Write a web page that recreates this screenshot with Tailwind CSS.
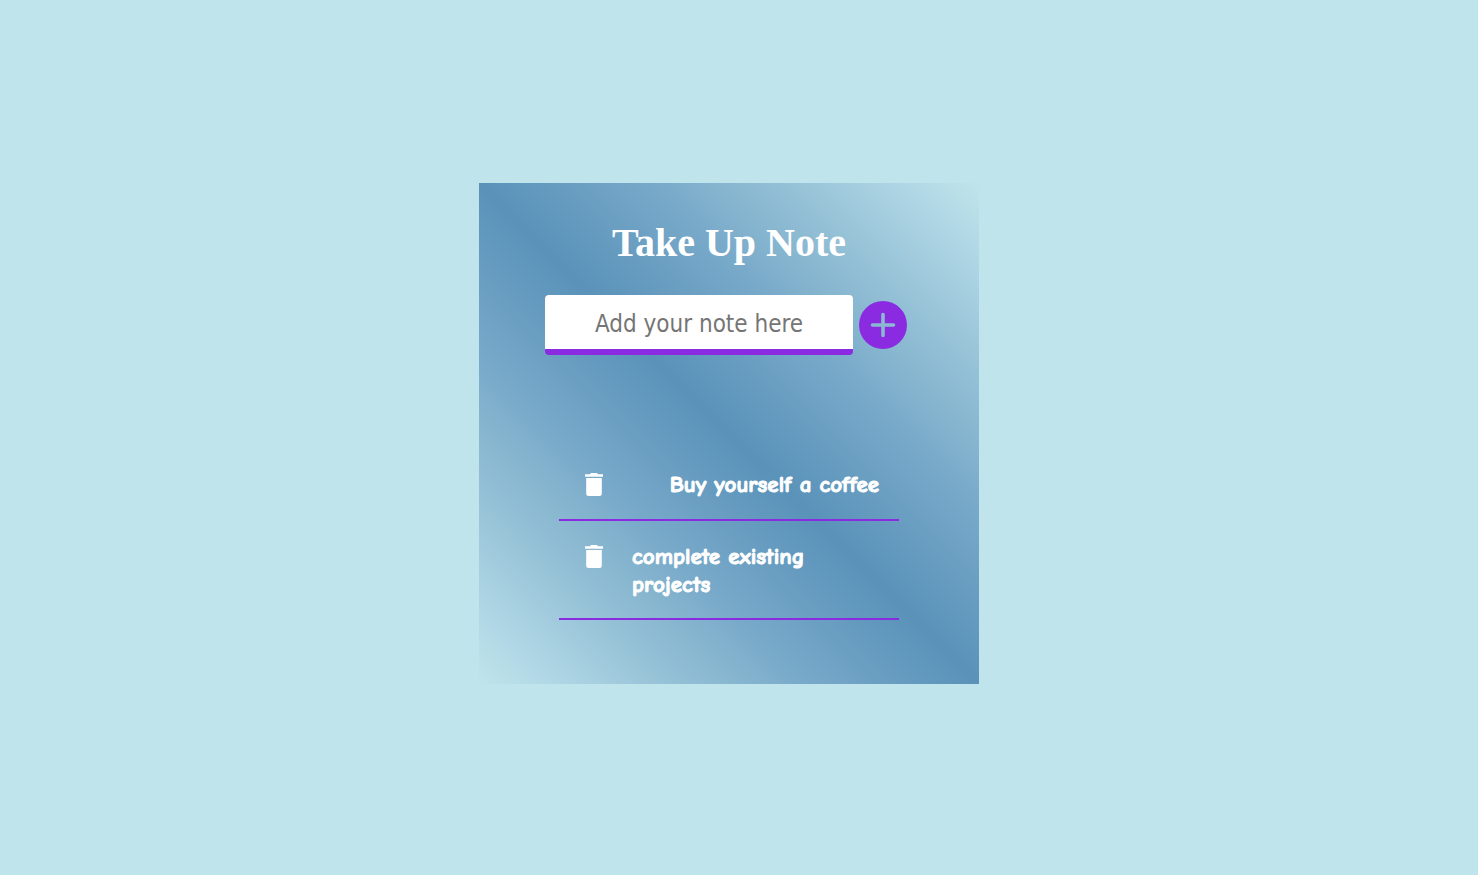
<!DOCTYPE html>
<html lang="en">
<head>
<meta charset="utf-8">
<meta name="viewport" content="width=device-width, initial-scale=1">
<title>Take Up Note</title>
<script src="https://cdn.jsdelivr.net/npm/@tailwindcss/browser@4"></script>
</head>
<body class="flex min-h-screen items-center justify-center bg-[#bfe4ec] pr-5 pb-2">
<main class="flex w-full max-w-[500px] flex-col items-center bg-[linear-gradient(45deg,#bfe4ea_0%,#afd6e5_8%,#9ac5d9_17%,#80b0cc_29%,#79aaca_32%,#5a92b9_50%,#79aaca_68%,#80b0cc_71%,#9ac5d9_83%,#afd6e5_92%,#bfe4ea_100%)] pt-9 pb-16">
  <h1 class="font-['Liberation_Serif',serif] text-[40px] leading-12 font-bold text-white">Take Up Note</h1>
  <form class="mt-7 mr-1.5 flex items-center gap-1.5">
    <input type="text" aria-label="Note" placeholder="Add your note here" class="h-15 w-[308px] rounded border-b-6 border-[#8a2be2] bg-white pt-1 text-center font-['DejaVu_Sans_Condensed','DejaVu_Sans',sans-serif] text-[24px] text-[#757575] outline-none placeholder:text-[#757575]">
    <button type="button" aria-label="Add note" class="size-12">
      <svg viewBox="0 0 48 48" class="size-12" fill="#8a2be2" fill-rule="evenodd"><path d="M24 0a24 24 0 1 0 0 48 24 24 0 0 0 0-48zM34.500 25.800h-8.700v8.700a1.800 1.800 0 0 1-3.600 0v-8.700h-8.700a1.800 1.800 0 0 1 0-3.600h8.700v-8.700a1.800 1.800 0 0 1 3.600 0v8.700h8.700a1.800 1.800 0 0 1 0 3.600z"/></svg>
    </button>
  </form>
  <ul class="mt-[95px] w-[340px] font-['Comic_Neue','Comic_Sans_MS',cursive] text-[23px] leading-7 font-bold text-white [-webkit-text-stroke:1px_white]">
    <li class="flex items-start justify-between border-b-2 border-[#8a2be2] pt-[21px] pr-5 pb-5 pl-[26px]">
      <button type="button" aria-label="Delete Buy yourself a coffee" class="mt-0.5 h-[23px] w-[18px]"><svg viewBox="0 0 18 23" class="h-[23px] w-[18px]" fill="currentColor"><path d="M0 1.200h5L6 0h6l1 1.200h5v2.500H0zM1.200 5h15.600v15.500a2.500 2.500 0 0 1-2.500 2.500H3.700a2.500 2.500 0 0 1-2.500-2.500z"/></svg></button>
      <span class="whitespace-nowrap">Buy yourself a coffee</span>
    </li>
    <li class="flex items-start gap-[29px] border-b-2 border-[#8a2be2] pt-[22px] pr-5 pb-[19px] pl-[26px]">
      <button type="button" aria-label="Delete complete existing projects" class="mt-0.5 h-[23px] w-[18px]"><svg viewBox="0 0 18 23" class="h-[23px] w-[18px]" fill="currentColor"><path d="M0 1.200h5L6 0h6l1 1.200h5v2.500H0zM1.200 5h15.600v15.500a2.500 2.500 0 0 1-2.500 2.500H3.700a2.500 2.500 0 0 1-2.500-2.500z"/></svg></button>
      <span>complete existing<br>projects</span>
    </li>
  </ul>
</main>
</body>
</html>
